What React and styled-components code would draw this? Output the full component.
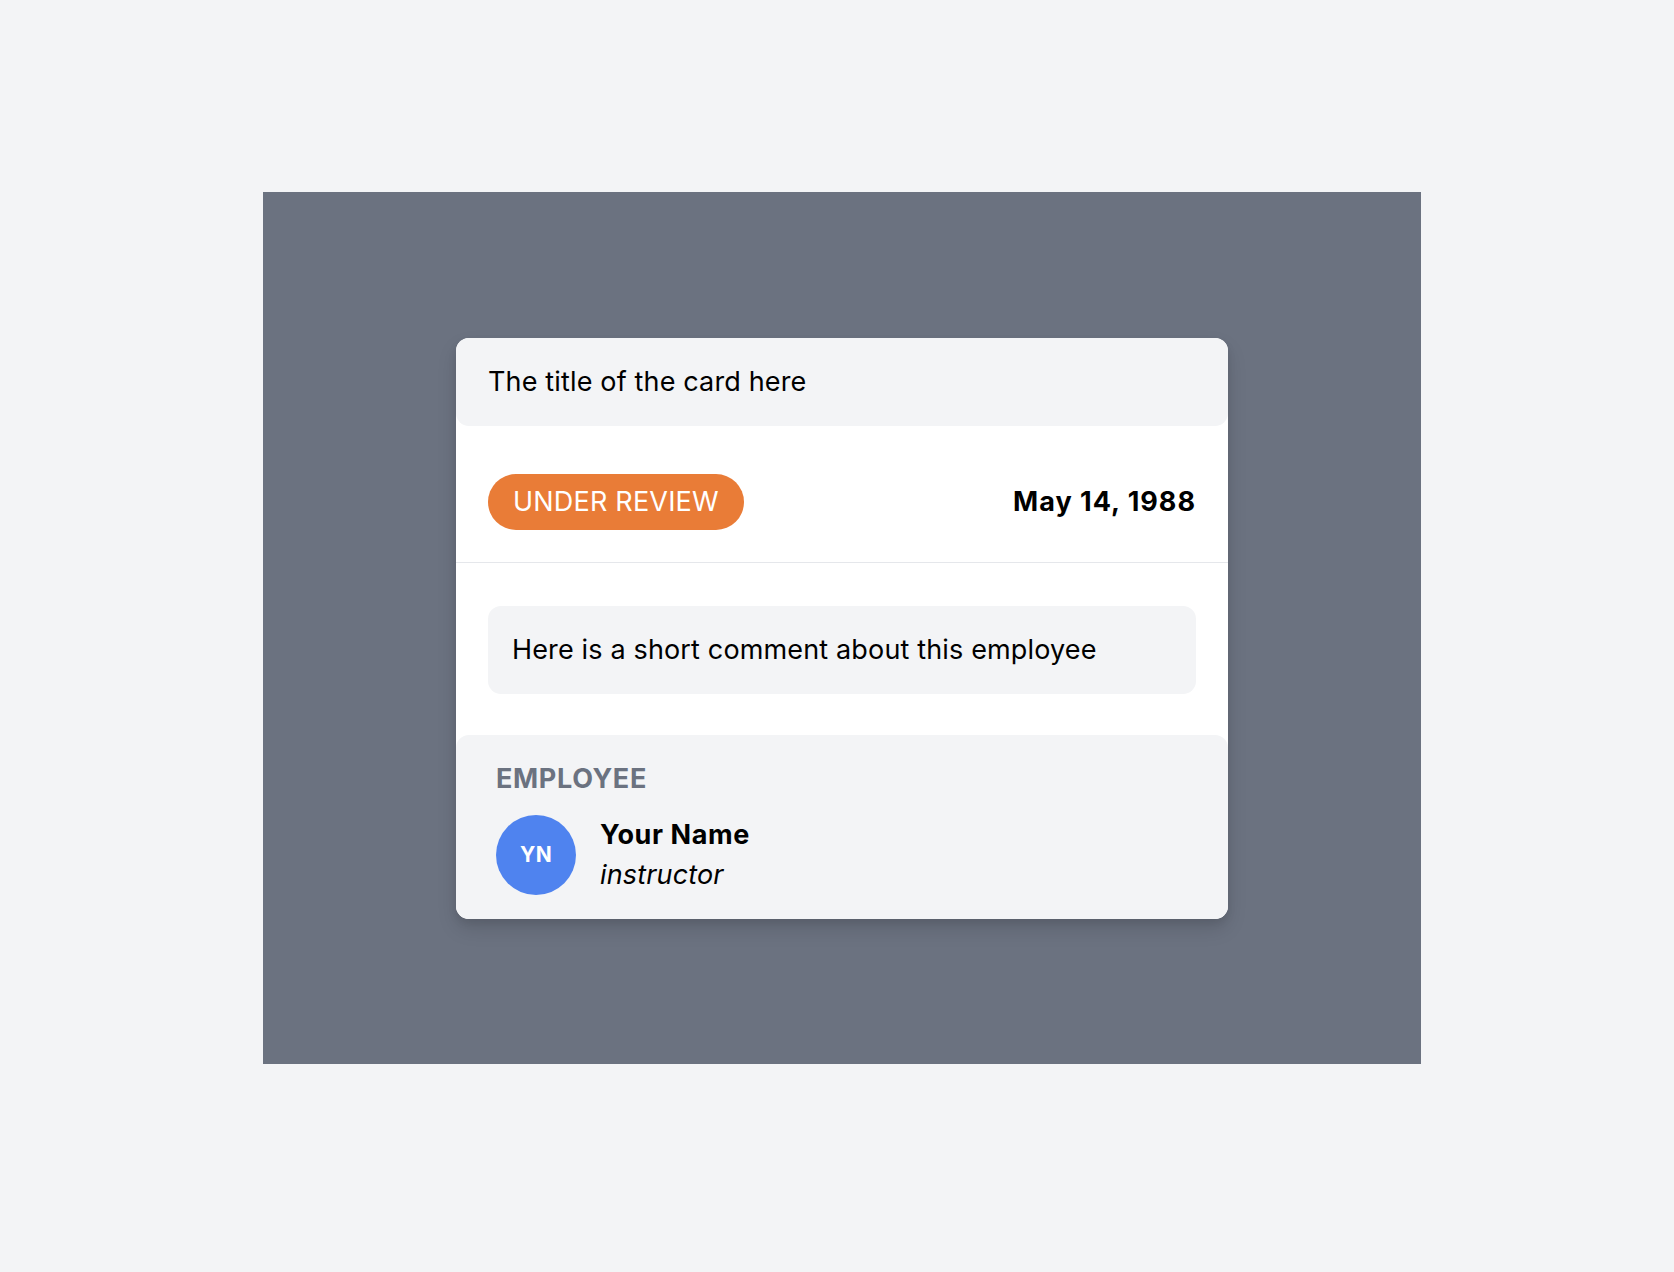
import React from "react";
import styled, { createGlobalStyle } from "styled-components";

const GlobalStyle = createGlobalStyle`
  body {
    margin: 0;
    background: #f3f4f6;
    font-family: "Inter", "Noto Sans", sans-serif;
    color: #000;
  }
`;

const Page = styled.div`
  padding: 192px 0 208px 263px;
`;

const Panel = styled.div`
  width: 1158px;
  height: 872px;
  background: #6b7280;
  display: flex;
  align-items: center;
  justify-content: center;
`;

const Card = styled.div`
  width: 772px;
  background: #ffffff;
  border-radius: 13px;
  box-shadow: 0 10px 20px rgba(0, 0, 0, 0.12), 0 4px 8px rgba(0, 0, 0, 0.08);
`;

const Header = styled.div`
  background: #f3f4f6;
  border-radius: 13px;
  padding: 24px 32px;
  font-size: 27px;
  line-height: 40px;
  letter-spacing: 0.15px;
`;

const StatusRow = styled.div`
  margin-top: 16px;
  padding: 32px;
  display: flex;
  align-items: center;
  justify-content: space-between;
  border-bottom: 1px solid #e5e7eb;
`;

const Badge = styled.span`
  background: ${(p) => p.color};
  color: #ffffff;
  border-radius: 999px;
  padding: 8px 25px;
  font-size: 27px;
  line-height: 40px;
  letter-spacing: 0.2px;
  text-transform: uppercase;
`;

const DateText = styled.span`
  font-size: 27px;
  line-height: 40px;
  font-weight: 700;
  letter-spacing: 1px;
`;

const CommentSection = styled.div`
  padding: 43px 32px 41px;
`;

const Comment = styled.div`
  background: #f3f4f6;
  border-radius: 13px;
  padding: 24px 25px 24px 24px;
  font-size: 27px;
  line-height: 40px;
  letter-spacing: 0.15px;
`;

const Footer = styled.div`
  background: #f3f4f6;
  border-radius: 13px;
  padding: 24px 40px;
`;

const Label = styled.div`
  font-size: 27px;
  line-height: 40px;
  font-weight: 700;
  letter-spacing: 0.65px;
  color: #6b7280;
  text-transform: uppercase;
`;

const Person = styled.div`
  margin-top: 16px;
  display: flex;
  align-items: center;
  gap: 24px;
`;

const Avatar = styled.div`
  width: 80px;
  height: 80px;
  border-radius: 50%;
  background: #4f83ef;
  color: #ffffff;
  display: flex;
  align-items: center;
  justify-content: center;
  font-size: 21px;
  font-weight: 700;
  letter-spacing: 0.4px;
`;

const Info = styled.div`
  display: flex;
  flex-direction: column;
  font-size: 27px;
  line-height: 40px;
`;

const Name = styled.span`
  font-weight: 700;
  letter-spacing: 0.6px;
`;

const Role = styled.span`
  font-style: italic;
  letter-spacing: 0.15px;
`;

export default function App() {
  return (
    <>
      <GlobalStyle />
      <Page>
        <Panel>
          <Card>
            <Header>The title of the card here</Header>
            <StatusRow>
              <Badge color="#e97c37">Under Review</Badge>
              <DateText>May 14, 1988</DateText>
            </StatusRow>
            <CommentSection>
              <Comment>Here is a short comment about this employee</Comment>
            </CommentSection>
            <Footer>
              <Label>Employee</Label>
              <Person>
                <Avatar>YN</Avatar>
                <Info>
                  <Name>Your Name</Name>
                  <Role>instructor</Role>
                </Info>
              </Person>
            </Footer>
          </Card>
        </Panel>
      </Page>
    </>
  );
}
